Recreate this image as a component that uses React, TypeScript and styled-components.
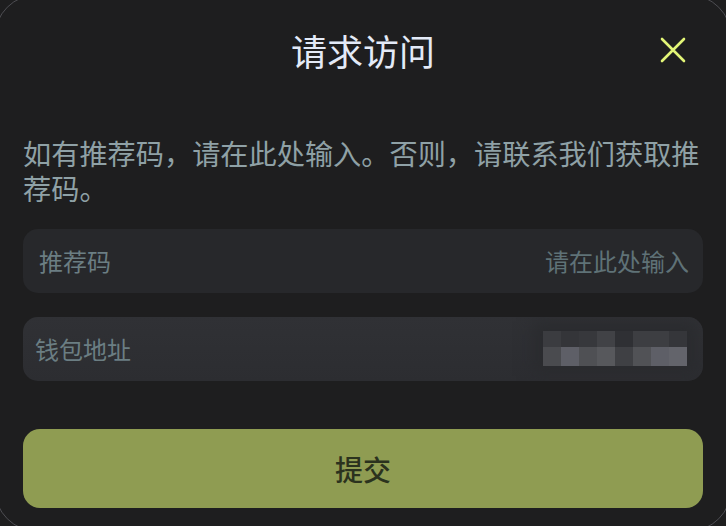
import React from "react";
import styled, { createGlobalStyle } from "styled-components";

const Global = createGlobalStyle`
  html, body {
    margin: 0;
    padding: 0;
    background: #1e1e1f;
    overflow: hidden;
  }
  * { box-sizing: border-box; }
`;

const Sheet = styled.div`
  margin: -6px;
  width: calc(100% + 12px);
  height: 538px;
  background: #1e1e1f;
  border: 1.5px solid #4e4e53;
  border-radius: 44px;
  padding: 20px 28px 0 28px;
  display: flex;
  flex-direction: column;
  font-family: "Noto Sans CJK SC", "Noto Sans", sans-serif;
`;

const Header = styled.div`
  position: relative;
  height: 70px;
  display: flex;
  align-items: center;
  justify-content: center;
`;

const Title = styled.h1`
  margin: 0;
  font-size: 36px;
  font-weight: 400;
  line-height: 1;
  color: #e3eaf7;
`;

const CloseButton = styled.button`
  position: absolute;
  right: 14px;
  top: 50%;
  transform: translateY(-50%);
  width: 32px;
  height: 32px;
  padding: 0;
  border: 0;
  background: transparent;
  display: flex;
  align-items: center;
  justify-content: center;
  cursor: pointer;
`;

const Description = styled.p`
  margin: 50px -6px 0 0;
  font-size: 28.2px;
  line-height: 35px;
  color: #8fa1a6;
`;

const Field = styled.div<{ $raised?: boolean }>`
  margin-top: 24px;
  height: 64px;
  border-radius: 15px;
  background: ${(p) =>
    p.$raised
      ? "linear-gradient(180deg, #303135 0%, #2c2d31 100%)"
      : "#27282b"};
  display: flex;
  align-items: center;
  justify-content: space-between;
  padding: 0 14px 0 ${(p) => (p.$raised ? "12px" : "16px")};
  font-size: 24px;
  overflow: hidden;
`;

const Label = styled.span`
  color: #6b7e83;
  line-height: 1;
`;

const Placeholder = styled.span`
  color: #5f7277;
  line-height: 1;
`;

const Masked = styled.div`
  display: grid;
  grid-template-columns: repeat(8, 18px);
  grid-template-rows: 16px 19px;
  margin-top: -2px;
  margin-right: 2px;
  box-shadow: 0 0 14px 10px rgba(42, 43, 47, 0.9);
`;

const Cell = styled.div<{ $c: string }>`
  background: ${(p) => p.$c};
`;

const Submit = styled.button`
  margin-top: 48px;
  height: 79px;
  border: 0;
  border-radius: 17px;
  background: #8f9c52;
  color: #2b321e;
  font-family: inherit;
  font-size: 28px;
  font-weight: 500;
  display: flex;
  align-items: center;
  justify-content: center;
  cursor: pointer;
`;

const maskCells = [
  "#3b3c40", "#343539", "#37383c", "#414246", "#2f3034", "#3d3e42", "#3d3e42", "#35363a",
  "#4a4b4f", "#5e5f67", "#4f5054", "#57585c", "#3f4044", "#515256", "#5e5f67", "#63646b",
];

export default function App() {
  return (
    <>
      <Global />
      <Sheet>
        <Header>
          <Title>请求访问</Title>
          <CloseButton aria-label="关闭">
            <svg width="28" height="28" viewBox="0 0 28 28">
              <path
                d="M3 3 L25 25 M25 3 L3 25"
                stroke="#e2f577"
                strokeWidth="2.6"
                strokeLinecap="round"
              />
            </svg>
          </CloseButton>
        </Header>
        <Description>
          如有推荐码，请在此处输入。否则，请联系我们获取推荐码。
        </Description>
        <Field>
          <Label>推荐码</Label>
          <Placeholder>请在此处输入</Placeholder>
        </Field>
        <Field $raised>
          <Label>钱包地址</Label>
          <Masked>
            {maskCells.map((c, i) => (
              <Cell key={i} $c={c} />
            ))}
          </Masked>
        </Field>
        <Submit>提交</Submit>
      </Sheet>
    </>
  );
}
